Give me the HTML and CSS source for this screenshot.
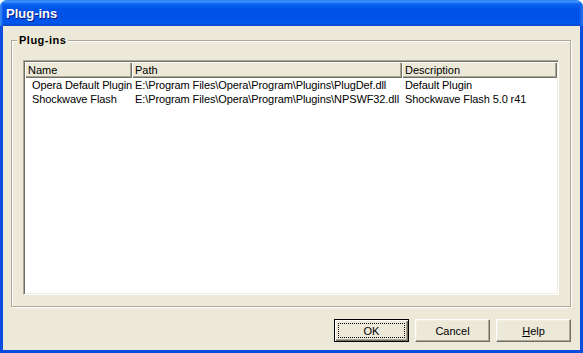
FILE: index.html
```html
<!DOCTYPE html>
<html lang="en">
<head>
    <meta charset="UTF-8">
    <title>Plug-ins</title>
    <link rel="stylesheet" href="styles.css">
</head>
<body>
    <div class="window">
        <div class="titlebar">Plug-ins</div>
        <div class="client">
            <fieldset class="group">
                <legend>Plug-ins</legend>
                <div class="listview">
                    <div class="header">
                        <div class="hcell">Name</div>
                        <div class="hcell">Path</div>
                        <div class="hcell">Description</div>
                    </div>
                    <div class="row">
                        <div class="cell first">Opera Default Plugin</div>
                        <div class="cell">E:\Program Files\Opera\Program\Plugins\PlugDef.dll</div>
                        <div class="cell">Default Plugin</div>
                    </div>
                    <div class="row">
                        <div class="cell first">Shockwave Flash</div>
                        <div class="cell">E:\Program Files\Opera\Program\Plugins\NPSWF32.dll</div>
                        <div class="cell">Shockwave Flash 5.0 r41</div>
                    </div>
                </div>
            </fieldset>
            <div class="buttons">
                <button class="default">OK</button>
                <button>Cancel</button>
                <button><u>H</u>elp</button>
            </div>
        </div>
    </div>
</body>
</html>
```

FILE: styles.css
```css
body {
    margin: 0;
    background: #ffffff;
    font-family: "Liberation Sans", Arial, sans-serif;
    font-size: 11px;
    color: #000;
}
.window {
    width: 583px;
    height: 353px;
    display: flex;
    flex-direction: column;
    border-radius: 7px 7px 0 0;
    overflow: hidden;
    background: #ECE9D8;
}
.titlebar {
    height: 26px;
    flex: none;
    display: flex;
    align-items: center;
    padding-left: 6px;
    color: #fff;
    font-weight: bold;
    font-size: 13px;
    text-shadow: 1px 1px 0 #0A1883;
    background: linear-gradient(to bottom, #2E7BF5 0%, #3D95FF 6%, #0A62F2 16%, #0053EA 35%, #0050E6 70%, #0058EE 88%, #0049D6 96%, #003BB5 100%);
    box-shadow: inset 3px 0 2px -1px #3A8AF8, inset -3px 0 3px -1px #2B73EE;
}
.client {
    flex: 1;
    display: flex;
    flex-direction: column;
    border: 3px solid #0A4CE0;
    border-top: none;
    padding: 7px 9px 8px 8px;
}
.group {
    flex: 1;
    display: flex;
    flex-direction: column;
    margin: 0;
    padding: 13px 11px 11px 11px;
    border: 1px solid #ACA899;
    box-shadow: 1px 1px 0 #fff, inset 1px 1px 0 #fff;
    min-width: 0;
}
.group legend {
    font-weight: bold;
    letter-spacing: 0.5px;
    line-height: 14px;
    padding: 0 2px;
    margin-left: -6px;
    background: #ECE9D8;
}
.listview {
    flex: 1;
    background: #fff;
    border: 1px solid;
    border-color: #ACA899 #fff #fff #ACA899;
    box-shadow: inset 1px 1px 0 #716F64, inset -1px -1px 0 #F1EFE2;
    padding: 1px;
}
.header, .row {
    display: grid;
    grid-template-columns: 107px 270px 1fr;
}
.hcell {
    height: 15px;
    line-height: 14px;
    padding-left: 2px;
    background: #ECE9D8;
    border-top: 1px solid #fff;
    border-left: 1px solid #fff;
    box-shadow: inset -1px -1px 0 #716F64, inset -2px -2px 0 #ACA899;
}
.row {
    height: 14px;
    line-height: 14px;
}
.cell {
    padding-left: 3px;
    white-space: nowrap;
    overflow: hidden;
    letter-spacing: -0.1px;
}
.cell.first {
    padding-left: 7px;
}
.buttons {
    flex: none;
    display: flex;
    justify-content: flex-end;
    gap: 6px;
    margin-top: 12px;
}
.buttons button {
    width: 75px;
    height: 23px;
    padding: 0;
    font-family: "Liberation Sans", Arial, sans-serif;
    font-size: 11px;
    color: #000;
    background: #ECE9D8;
    border: 1px solid;
    border-color: #fff #716F64 #716F64 #fff;
    box-shadow: inset -1px -1px 0 #ACA899, inset 1px 1px 0 #F1EFE2;
}
.buttons button.default {
    border: 1px solid #000;
    box-shadow: inset 1px 1px 0 #fff, inset -1px -1px 0 #716F64, inset -2px -2px 0 #ACA899;
    outline: 1px dotted #000;
    outline-offset: -5px;
}
```
